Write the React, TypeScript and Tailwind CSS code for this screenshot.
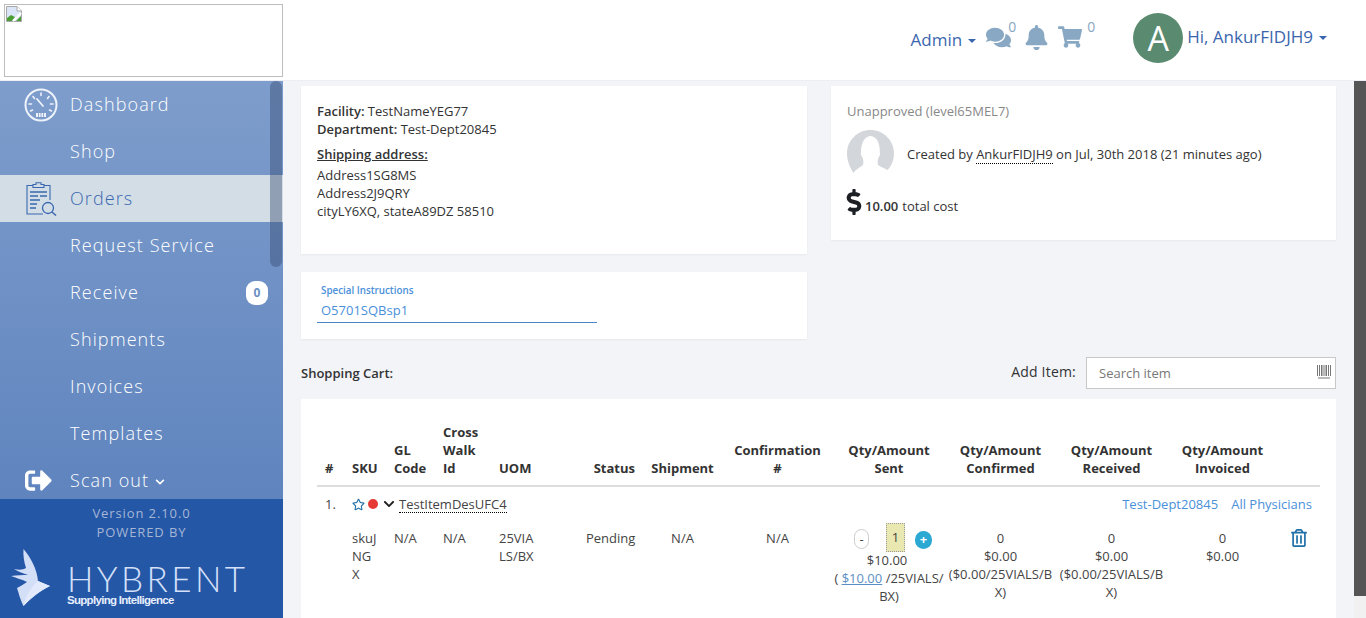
import { FaBell, FaChevronDown, FaComments, FaDollarSign, FaRegStar, FaRegTrashAlt, FaShoppingCart, FaSignOutAlt } from "react-icons/fa";

const navItems = [
  { label: "Dashboard", icon: "dashboard" },
  { label: "Shop" },
  { label: "Orders", icon: "orders", active: true },
  { label: "Request Service" },
  { label: "Receive", badge: "0" },
  { label: "Shipments" },
  { label: "Invoices" },
  { label: "Templates" },
];

// ─── Drawn icons ──────────────────────────────────────────────────────────────

function BrokenImage() {
  return (
    <svg width="16" height="16" viewBox="0 0 16 16" className="absolute left-px top-px">
      <path d="M0.5 0.5H11L15.5 5V15.5H0.5Z" fill="#dbe5f8" stroke="#a8a8a8" />
      <path d="M11 0.5V5H15.5" fill="#fff" stroke="#a8a8a8" />
      <path d="M1 15V12L5 9L9 11L6 15Z" fill="#4a9e36" />
      <path d="M10 15L15 10V15Z" fill="#4a9e36" />
      <path d="M7 15L15 7" stroke="#fff" strokeWidth="2" />
    </svg>
  );
}

function GaugeIcon() {
  return (
    <svg width="34" height="34" viewBox="0 0 34 34" fill="none" stroke="#eef3fb" strokeLinecap="round">
      <circle cx="17" cy="17" r="15.5" strokeWidth="2" />
      <path d="M17 5V7.5M9 8.5L10.5 10.5M25 8.5L23.5 10.5M5 16H7.5M26.5 16H29M6.5 23L8.5 22M27.5 23L25.5 22" strokeWidth="1.6" />
      <path d="M13 11L19 18" strokeWidth="1.8" />
      <path d="M12 25H22V29H12Z" fill="#eef3fb" stroke="none" />
      <path d="M14.5 24.5V29.5M17 24.5V29.5M19.5 24.5V29.5" stroke="#7c9bcb" strokeWidth="0.8" />
    </svg>
  );
}

function OrdersIcon() {
  return (
    <svg width="32" height="34" viewBox="0 0 32 34" fill="none" stroke="#3a68b0" strokeWidth="1.1">
      <path d="M8 3.5H2V32H18M19 3.5H25V18" />
      <path d="M8 5.5V2.5H11V0.8H16V2.5H19V5.5Z" />
      <path d="M5 10H22M5 14H13M15 14H22M5 18H15M5 22H12M5 26H11" strokeWidth="1.3" />
      <circle cx="23" cy="26" r="5.5" strokeWidth="1.3" />
      <path d="M27 30L31 33.5" strokeWidth="1.5" />
    </svg>
  );
}

function HybrentMark() {
  return (
    <svg width="40" height="58" viewBox="0 0 40 58">
      <path
        d="M12.5 0C20 9 26 20 27 32L39 37C30 41 20 49 12.5 57C9 50 8 45 6 39C10 37 13 35 16 33C10 30 5 29 0 27C6 26 12 26 17 26C12 24 8 23 3 20C8 21 12 21 15 19C13 13 12 6 12.5 0Z"
        fill="#d3dff7"
      />
      <path d="M27 32L39 37C30 41 20 49 12.5 57C14 48 20 38 27 32Z" fill="#e2eafb" />
    </svg>
  );
}

function Silhouette() {
  return (
    <svg width="47" height="44" viewBox="0 0 47 44" className="shrink-0">
      <path d="M23.5 0C36.5 0 47 10.5 47 23.5C47 30 44.5 36 40.5 40C38 38 33 37 31 35C30 31 31 28 33 25C33 20 33 7 23.5 6C14 7 14 20 14 25C16 28 17 31 16 35C14 37 9 39 6.5 43C2.5 37 0 30 0 23.5C0 10.5 10.5 0 23.5 0Z" fill="#d3d6db" />
    </svg>
  );
}

function Barcode() {
  return (
    <svg width="14" height="14" viewBox="0 0 14 14" fill="#777">
      <path d="M0 0H1V11H0ZM2 0H3V11H2ZM4 0H5.5V11H4ZM6.5 0H7.5V11H6.5ZM8.5 0H10V11H8.5ZM11 0H12V11H11ZM13 0H14V11H13ZM1 12.5H13V13.5H1Z" />
    </svg>
  );
}

function Caret() {
  return <span className="ml-[6px] inline-block border-x-[4px] border-t-[4px] border-x-transparent border-t-[#3a66ad] align-middle" />;
}

// ─── Sidebar ──────────────────────────────────────────────────────────────────

function Sidebar() {
  return (
    <aside className="flex w-[283px] shrink-0 flex-col">
      <nav className="relative h-[418px] overflow-hidden bg-gradient-to-b from-[#7e9dcc] to-[#5f84be]">
        {navItems.map((item) => (
          <div
            key={item.label}
            className={
              item.active
                ? "flex h-[47px] items-center bg-[#d3dde6] text-[#3a68b0]"
                : "flex h-[47px] items-center text-white"
            }
          >
            <div className="flex w-[70px] shrink-0 justify-center pl-[11px]">
              {item.icon === "dashboard" && <GaugeIcon />}
              {item.icon === "orders" && <OrdersIcon />}
            </div>
            <span className="text-[18px] font-light tracking-[1.1px]">{item.label}</span>
            {item.badge && (
              <span className="ml-auto mr-[15px] flex h-[24px] w-[22px] items-center justify-center rounded-[9px] bg-white text-[12px] font-bold text-[#6b8fc4]">
                {item.badge}
              </span>
            )}
          </div>
        ))}
        <div className="flex h-[47px] items-center text-white">
          <div className="flex w-[70px] shrink-0 justify-center pl-[6px]">
            <FaSignOutAlt size={27} />
          </div>
          <span className="text-[18px] font-light tracking-[1.1px]">Scan out</span>
          <FaChevronDown size={10} className="ml-[6px] mt-[2px]" />
        </div>
        <div className="absolute right-px top-0 h-[186px] w-[12px] rounded-[6px] bg-[#2f4468]/40" />
      </nav>
      <div className="flex-1 bg-[#2557a7] text-center text-[13px] tracking-[0.9px] text-[#a4b6d4]">
        <div className="mt-[5px] leading-[18px]">Version 2.10.0</div>
        <div className="mt-px leading-[18px]">POWERED BY</div>
        <div className="mt-[9px] flex items-start pl-[11px]">
          <div className="-mt-[1px]"><HybrentMark /></div>
          <div className="ml-[16px] pt-[13px] text-left text-[#d5e1f8]">
            <div className="font-['Lato',sans-serif] text-[35px] font-light leading-[30px] tracking-[3.4px]">HYBRENT</div>
            <div className="font-['Liberation_Sans',sans-serif] text-[11.5px] font-bold leading-[14px] tracking-[-0.7px] text-[#e6eefc]">Supplying Intelligence</div>
          </div>
        </div>
      </div>
    </aside>
  );
}

// ─── Top bar ──────────────────────────────────────────────────────────────────

function TopBar() {
  return (
    <header className="flex h-[81px] shrink-0 items-start justify-between border-b border-[#eceef3] bg-white pl-[4px] pr-[39px] pt-[4px]">
      <div className="relative h-[73px] w-[279px] border border-[#bdbdbd]">
        <BrokenImage />
      </div>
      <div className="flex items-start text-[#3a66ad]">
        <div className="mt-[24px] text-[17px] leading-[24px]">Admin<Caret /></div>
        <div className="ml-[10px] mt-[21px] flex items-start text-[#88a8c3]">
          <FaComments size={25} />
          <span className="-ml-[3px] -mt-[8px] text-[14px] leading-[20px]">0</span>
          <FaBell size={25} className="ml-[8px]" />
          <FaShoppingCart size={24} className="ml-[9px]" />
          <span className="-mt-[8px] ml-[5px] text-[14px] leading-[20px]">0</span>
        </div>
        <div className="ml-[38px] mt-[9px] flex h-[50px] w-[50px] items-center justify-center rounded-full bg-[#5a8a70] text-[34px] text-white">A</div>
        <div className="ml-[4px] mt-[21px] text-[17px] leading-[24px]">Hi, AnkurFIDJH9<Caret /></div>
      </div>
    </header>
  );
}

// ─── Order summary cards ──────────────────────────────────────────────────────

function SummaryCards() {
  return (
    <div className="grid grid-cols-[506px_505px] items-start gap-x-[24px]">
      <div className="flex flex-col gap-[18px]">
        <div className="h-[168px] bg-white px-[16px] pt-[16px] text-[13px] leading-[18px] text-[#333] shadow-[0_1px_2px_rgba(0,0,0,0.05)]">
          <div><span className="font-semibold">Facility:</span> TestNameYEG77</div>
          <div><span className="font-semibold">Department:</span> Test-Dept20845</div>
          <div className="mt-[7px] font-semibold underline">Shipping address:</div>
          <div className="mt-[3px]">Address1SG8MS</div>
          <div>Address2J9QRY</div>
          <div>cityLY6XQ, stateA89DZ 58510</div>
        </div>
        <div className="h-[67px] bg-white px-[16px] pt-[12px] shadow-[0_1px_2px_rgba(0,0,0,0.05)]">
          <div className="w-[280px] border-b border-[#4a86c5] text-[#4a90d9]">
            <div className="pl-[4px] text-[9.8px] font-semibold leading-[14px]">Special Instructions</div>
            <div className="mt-[3px] pb-[3px] pl-[4px] text-[13px] leading-[18px]">O5701SQBsp1</div>
          </div>
        </div>
      </div>
      <div className="h-[154px] bg-white px-[16px] pt-[16px] text-[13px] leading-[18px] text-[#333] shadow-[0_1px_2px_rgba(0,0,0,0.05)]">
        <div className="text-[#888]">Unapproved (level65MEL7)</div>
        <div className="mt-[10px] flex items-center">
          <Silhouette />
          <div className="ml-[13px] mt-[4px]">
            Created by <span className="border-b border-dotted border-black">AnkurFIDJH9</span> on Jul, 30th 2018 (21 minutes ago)
          </div>
        </div>
        <div className="mt-[15px] flex items-end">
          <FaDollarSign size={26} className="-ml-[6px] text-[#1c1f24]" />
          <span className="-ml-[2px] font-semibold">10.00</span>
          <span className="ml-[4px]">total cost</span>
        </div>
      </div>
    </div>
  );
}

// ─── Shopping cart table ──────────────────────────────────────────────────────

function CartTable() {
  const th = "px-[8px] pb-[8px] align-bottom font-bold";
  const cell = "px-[8px] pt-[16px] align-top";
  return (
    <div className="mt-[10px] bg-white px-[16px] pb-[60px] pt-[16px]">
      <table className="w-[1003px] table-fixed text-[13px] leading-[18px] text-[#444]">
        <thead>
          <tr className="border-b-2 border-[#ddd] text-[#333]">
            <th className={`${th} w-[27px] text-left`}>#</th>
            <th className={`${th} w-[42px] text-left`}>SKU</th>
            <th className={`${th} w-[49px] text-left`}>GL Code</th>
            <th className={`${th} w-[56px] pt-[8px] text-left`}>Cross Walk Id</th>
            <th className={`${th} w-[87px] text-left`}>UOM</th>
            <th className={`${th} w-[65px] text-right`}>Status</th>
            <th className={`${th} w-[79px] text-center`}>Shipment</th>
            <th className={`${th} w-[111px] text-center`}>Confirmation #</th>
            <th className={`${th} w-[112px] text-center`}>Qty/Amount Sent</th>
            <th className={`${th} w-[111px] text-center`}>Qty/Amount Confirmed</th>
            <th className={`${th} w-[111px] text-center`}>Qty/Amount Received</th>
            <th className={`${th} w-[111px] text-center`}>Qty/Amount Invoiced</th>
            <th className="w-[42px]" />
          </tr>
        </thead>
        <tbody>
          <tr>
            <td className="px-[8px] pt-[8px]">1.</td>
            <td colSpan={7} className="px-[8px] pt-[8px]">
              <div className="flex items-center">
                <FaRegStar size={13} className="text-[#1f6fa8]" />
                <span className="ml-[3px] h-[10px] w-[10px] rounded-full bg-[#e53935]" />
                <FaChevronDown size={12} className="ml-[5px] text-[#222]" />
                <span className="ml-[4px] border-b border-dotted border-black leading-[16px]">TestItemDesUFC4</span>
              </div>
            </td>
            <td colSpan={5} className="pr-[8px] pt-[8px] text-right text-[#4a90d9]">
              Test-Dept20845<span className="ml-[13px]">All Physicians</span>
            </td>
          </tr>
          <tr>
            <td />
            <td className={`${cell} break-all`}>skuJNGX</td>
            <td className={cell}>N/A</td>
            <td className={cell}>N/A</td>
            <td className={cell}><div className="w-[36px] break-all">25VIALS/BX</div></td>
            <td className={`${cell} text-right`}>Pending</td>
            <td className={`${cell} text-center`}>N/A</td>
            <td className={`${cell} text-center`}>N/A</td>
            <td className="pt-[10px] text-center align-top">
              <div className="flex h-[28px] items-center pl-[21px]">
                <span className="mt-[4px] flex h-[20px] w-[15px] items-center justify-center rounded-[8px] border border-[#ccc] leading-none">-</span>
                <span className="ml-[17px] flex h-[29px] w-[19px] items-center justify-center border border-dotted border-[#999] bg-[#e8e8b0]">1</span>
                <span className="ml-[10px] mt-[5px] flex h-[18px] w-[17px] items-center justify-center rounded-full bg-[#2ba9d3] font-bold leading-none text-white">+</span>
              </div>
              <div className="pr-[4px]">$10.00</div>
              <div className="break-all">( <span className="text-[#5b8fc4] underline">$10.00</span> /25VIALS/BX)</div>
            </td>
            <td className={`${cell} break-all !px-[3px] text-center`}>0<br />$0.00<br />($0.00/25VIALS/BX)</td>
            <td className={`${cell} break-all !px-[3px] text-center`}>0<br />$0.00<br />($0.00/25VIALS/BX)</td>
            <td className={`${cell} text-center`}>0<br />$0.00</td>
            <td className="pt-[16px] align-top">
              <FaRegTrashAlt size={18} className="ml-[12px] text-[#1f6fa8]" />
            </td>
          </tr>
        </tbody>
      </table>
    </div>
  );
}

// ─── Main ─────────────────────────────────────────────────────────────────────

export default function App() {
  return (
    <div className="flex h-screen flex-col overflow-hidden bg-[#f2f4f8] font-['Open_Sans',sans-serif]">
      <TopBar />
      <div className="flex min-h-0 flex-1">
        <Sidebar />
        <main className="min-w-0 flex-1 overflow-hidden pl-[18px] pt-[5px]">
          <SummaryCards />
          <div className="mt-[18px] flex h-[32px] w-[1035px] items-center justify-between text-[13px] text-[#333]">
            <span className="mt-[1px] font-semibold">Shopping Cart:</span>
            <div className="flex items-center">
              <span className="mb-[4px] mr-[10px] text-[14px] tracking-[0.2px]">Add Item:</span>
              <div className="flex h-[32px] w-[250px] items-center justify-between border border-[#c8c8c8] bg-white pl-[12px] pr-[4px] text-[#777]">
                <span className="mt-[1px]">Search item</span>
                <span className="-mt-[3px]"><Barcode /></span>
              </div>
            </div>
          </div>
          <div className="w-[1035px]">
            <CartTable />
          </div>
        </main>
        <div className="flex w-[12px] shrink-0 flex-col">
          <div className="h-[515px] bg-[#555]" />
          <div className="flex-1 bg-[#f1f1f1]" />
        </div>
      </div>
    </div>
  );
}
